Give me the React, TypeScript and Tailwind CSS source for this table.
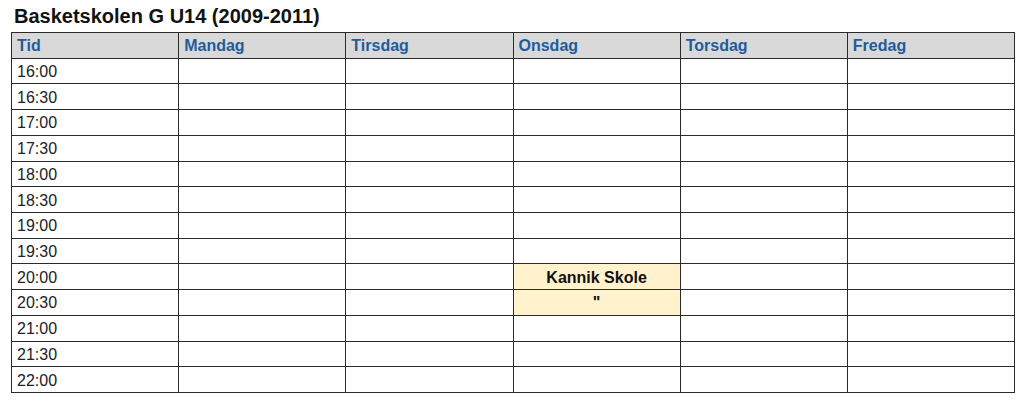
import React from "react";

const days = ["Tid", "Mandag", "Tirsdag", "Onsdag", "Torsdag", "Fredag"];
const times = ["16:00","16:30","17:00","17:30","18:00","18:30","19:00","19:30","20:00","20:30","21:00","21:30","22:00"];

export default function App() {
  return (
    <div className="w-[1024px] h-[401px] bg-white overflow-hidden" style={{ fontFamily: '"Liberation Sans", Arial, sans-serif' }}>
      <div className="pl-[14px] pt-[5px] h-[32px] text-[20px] leading-[23px] font-bold text-[#111]">
        Basketskolen G U14 (2009-2011)
      </div>
      <div className="ml-[11px] w-[1004px] h-[361px] grid grid-cols-6 grid-rows-[repeat(14,minmax(0,1fr))] border-l border-t border-[#2a2a2a]">
        {days.map((d) => (
          <div key={d} className="bg-[#d9d9d9] border-r border-b border-[#2a2a2a] px-[5px] pt-[2px] flex items-center text-[16px] leading-[20px] font-bold text-[#1f5c9c]">
            {d}
          </div>
        ))}
        {times.map((t) => (
          <React.Fragment key={t}>
            <div className="border-r border-b border-[#2a2a2a] px-[5px] pt-[2px] flex items-center text-[16px] leading-[20px] text-[#222]">{t}</div>
            {[1, 2, 3, 4, 5].map((c) => {
              const ev = c === 3 && (t === "20:00" || t === "20:30");
              return (
                <div
                  key={c}
                  className={
                    "border-r border-b border-[#2a2a2a] pt-[2px] flex items-center justify-center text-[16px] leading-[20px] font-bold text-[#111] " +
                    (ev ? "bg-[#fff2cc]" : "bg-white")
                  }
                >
                  {ev ? (t === "20:00" ? "Kannik Skole" : "\"") : null}
                </div>
              );
            })}
          </React.Fragment>
        ))}
      </div>
    </div>
  );
}
